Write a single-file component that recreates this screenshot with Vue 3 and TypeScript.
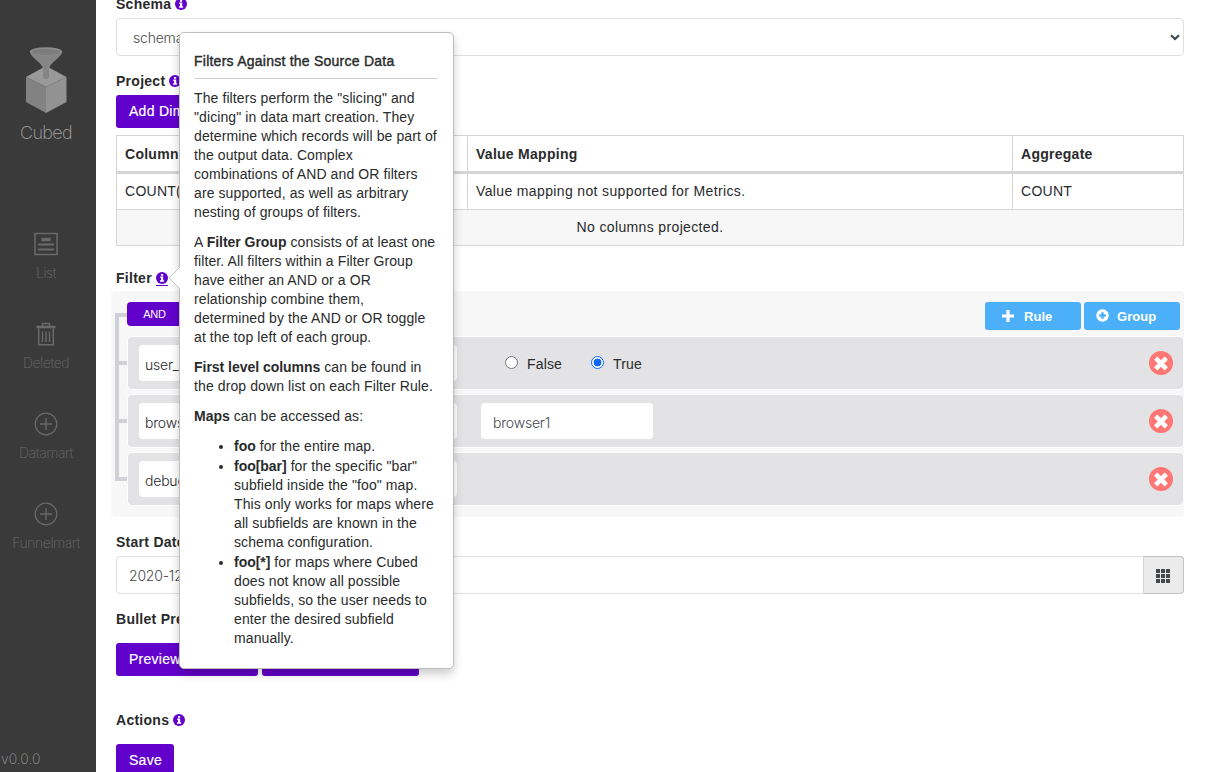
<script setup lang="ts">
interface NavItem { label: string; icon: 'list' | 'trash' | 'plus' }
interface Rule { column: string; kind: 'bool' | 'text' | 'none'; value: string }

const nav: NavItem[] = [
  { label: 'List', icon: 'list' },
  { label: 'Deleted', icon: 'trash' },
  { label: 'Datamart', icon: 'plus' },
  { label: 'Funnelmart', icon: 'plus' },
]
const rules: Rule[] = [
  { column: 'user_', kind: 'bool', value: 'True' },
  { column: 'brows', kind: 'text', value: 'browser1' },
  { column: 'debug', kind: 'none', value: '' },
]
const cells: number[] = [0, 1, 2, 3, 4, 5, 6, 7, 8]
</script>

<template>
  <div class="app">
    <aside class="side">
      <div class="brand">
        <svg width="46" height="70" viewBox="0 0 46 70">
          <path d="M3 31 23 20 43.500 31 23 41z" fill="#999" />
          <path d="M3 31 23 41V67L3 56z" fill="#828282" />
          <path d="M43.500 31 23 41V67L43.500 56z" fill="#929292" />
          <path d="M7 6C8 12 19 16 20 23V32Q23 34 26 32V23C27 16 38 12 39 6z" fill="#858585" />
          <ellipse cx="23" cy="5.500" rx="16.200" ry="4.300" fill="#8c8c8c" />
          <ellipse cx="23" cy="5.900" rx="14" ry="3" fill="#7c7c7c" />
        </svg>
        <span>Cubed</span>
      </div>
      <nav>
        <div v-for="n in nav" :key="n.label" class="nav-item">
          <svg v-if="n.icon === 'list'" width="24" height="24" viewBox="0 0 24 24" fill="none" stroke="#6a6a6a">
            <rect x="1" y="1.500" width="22" height="21" stroke-width="1.500" />
            <path d="M7.500 7.500h9" stroke-width="3.500" /><path d="M4 12.500h16M4 17.500h16" stroke-width="2" />
          </svg>
          <svg v-else-if="n.icon === 'trash'" width="24" height="24" viewBox="0 0 24 24" fill="none" stroke="#6a6a6a">
            <path d="M8.500 4V1.500h7V4" stroke-width="1.500" /><path d="M2.500 5h19" stroke-width="2.600" />
            <path d="M4.700 6.500v16.200h14.600V6.500" stroke-width="1.500" /><path d="M8.500 9.500v10.500M12 9.500v10.500M15.500 9.500v10.500" stroke-width="1.400" />
          </svg>
          <svg v-else width="24" height="24" viewBox="0 0 24 24" fill="none" stroke="#6a6a6a" stroke-width="1.300">
            <circle cx="12" cy="12" r="10.800" /><path d="M12 6v12M6 12h12" />
          </svg>
          <span>{{ n.label }}</span>
        </div>
      </nav>
      <span class="version">v0.0.0</span>
    </aside>

    <main class="main">
      <div class="label first">Schema
        <svg class="info" viewBox="0 0 12 12"><circle cx="6" cy="6" r="6" /><path d="M5 2h2.200v1.700H5zM4.200 4.600h3v3.700h.9v1.400H4V8.300h1V6h-.8z" fill="#fff" /></svg>
      </div>
      <div class="field select"><span>schema1</span>
        <svg width="10" height="7" viewBox="0 0 10 7"><path d="M1 1.200 5 5l4-3.800" fill="none" stroke="#3c434b" stroke-width="2" /></svg>
      </div>
      <div class="label project">Project
        <svg class="info" viewBox="0 0 12 12"><circle cx="6" cy="6" r="6" /><path d="M5 2h2.200v1.700H5zM4.200 4.600h3v3.700h.9v1.400H4V8.300h1V6h-.8z" fill="#fff" /></svg>
      </div>
      <button class="btn add">Add Dimension</button>
      <div class="table">
        <div class="row head"><span>Column</span><span>Value Mapping</span><span>Aggregate</span></div>
        <div class="row"><span>COUNT(*)</span><span class="wide">Value mapping not supported for Metrics.</span><span>COUNT</span></div>
        <div class="empty">No columns projected.</div>
      </div>
      <div class="label filter-label">Filter
        <span class="linked"><svg class="info" viewBox="0 0 12 12"><circle cx="6" cy="6" r="6" /><path d="M5 2h2.200v1.700H5zM4.200 4.600h3v3.700h.9v1.400H4V8.300h1V6h-.8z" fill="#fff" /></svg></span>
      </div>
      <section class="group">
        <div class="group-head">
          <button class="and">AND</button>
          <div class="group-actions">
            <button class="blue rule-btn"><svg width="12" height="12" viewBox="0 0 12 12"><path d="M6 0v12M0 6h12" stroke="#fff" stroke-width="3.200" /></svg>Rule</button>
            <button class="blue group-btn"><svg width="13" height="13" viewBox="0 0 13 13"><circle cx="6.500" cy="6.500" r="6.200" fill="#fff" /><path d="M6.500 3.200v6.600M3.200 6.500h6.600" stroke="#4bb0f9" stroke-width="2.400" /></svg>Group</button>
          </div>
        </div>
        <div v-for="r in rules" :key="r.column" class="rule">
          <div class="rule-col">{{ r.column }}</div>
          <div class="rule-op"></div>
          <div v-if="r.kind === 'bool'" class="radios">
            <i class="radio"></i><span class="false">False</span>
            <i class="radio on"></i><span>True</span>
          </div>
          <div v-else-if="r.kind === 'text'" class="rule-val">{{ r.value }}</div>
          <svg class="remove" width="24" height="24" viewBox="0 0 24 24"><circle cx="12" cy="12" r="12" fill="#ff7775" /><path d="M6.700 7.200 17.300 17.800M17.300 7.200 6.700 17.800" stroke="#fff" stroke-width="4.600" /></svg>
        </div>
      </section>
      <div class="label date-label">Start Date</div>
      <div class="field date"><span>2020-12-01</span>
        <div class="cal"><div class="dots"><i v-for="c in cells" :key="c"></i></div></div>
      </div>
      <div class="label bullet-label">Bullet Preview</div>
      <div class="buttons"><button class="btn prev">Preview Query</button><button class="btn prev2"></button></div>
      <div class="label actions-label">Actions
        <svg class="info" viewBox="0 0 12 12"><circle cx="6" cy="6" r="6" /><path d="M5 2h2.200v1.700H5zM4.200 4.600h3v3.700h.9v1.400H4V8.300h1V6h-.8z" fill="#fff" /></svg>
      </div>
      <button class="btn save">Save</button>
    </main>

    <div class="pop">
      <svg class="tip" width="12" height="24" viewBox="0 0 12 24"><path d="M12 1 1 12l11 11" fill="#fff" stroke="#c4c4c4" /></svg>
      <h4>Filters Against the Source Data</h4>
      <p>The filters perform the "slicing" and<br>"dicing" in data mart creation. They<br>determine which records will be part of<br>the output data. Complex<br>combinations of AND and OR filters<br>are supported, as well as arbitrary<br>nesting of groups of filters.</p>
      <p>A <b>Filter Group</b> consists of at least one<br>filter. All filters within a Filter Group<br>have either an AND or a OR<br>relationship combine them,<br>determined by the AND or OR toggle<br>at the top left of each group.</p>
      <p><b>First level columns</b> can be found in<br>the drop down list on each Filter Rule.</p>
      <p><b>Maps</b> can be accessed as:</p>
      <ul>
        <li><b>foo</b> for the entire map.</li>
        <li><b>foo[bar]</b> for the specific "bar"<br>subfield inside the "foo" map.<br>This only works for maps where<br>all subfields are known in the<br>schema configuration.</li>
        <li><b>foo[*]</b> for maps where Cubed<br>does not know all possible<br>subfields, so the user needs to<br>enter the desired subfield<br>manually.</li>
      </ul>
    </div>
  </div>
</template>

<style>
body { background: #fff; overflow: hidden; }
</style>
<style scoped>
*, *::before { box-sizing: border-box; }
.app { position: relative; display: flex; width: 1209px; height: 772px; overflow: hidden; font: 14px/20px "Liberation Sans", Arial, sans-serif; letter-spacing: 0.27px; color: #292b2c; }
button { font: inherit; letter-spacing: inherit; border: 0; padding: 0; margin: 0; }
.side { width: 96px; height: 772px; background: #3a3a3a; color: #6a6a6a; display: flex; flex-direction: column; font-family: Inter, sans-serif; font-weight: 200; letter-spacing: -0.45px; }
.brand { height: 232px; padding-top: 46px; padding-right: 4px; display: flex; flex-direction: column; align-items: center; color: #a6a6a6; }
.brand span { font-size: 18px; line-height: 24px; margin-top: 5px; letter-spacing: -0.7px; }
.nav-item { height: 90px; padding-right: 4px; display: flex; flex-direction: column; align-items: center; }
.nav-item span { margin-top: 7px; font-size: 14px; }
.version { margin-top: auto; height: 23px; color: #999; letter-spacing: 0; padding-left: 1px; }
.main { width: 1113px; padding: 0 25px 0 20px; display: flex; flex-direction: column; align-items: stretch; }
.label { height: 20px; font-weight: 700; display: flex; align-items: center; gap: 4px; flex: none; }
.first { margin-top: -6px; }
.info { width: 12px; height: 12px; fill: #6200cc; display: block; }
.field { height: 38px; flex: none; border: 1px solid #dfdfdf; border-radius: 4px; display: flex; align-items: center; justify-content: space-between; font-family: Inter, sans-serif; font-weight: 300; letter-spacing: -0.2px; color: #464a4c; }
.field > span { padding-top: 2px; }
.select { margin-top: 4px; padding: 0 3px 0 16px; }
.project { margin-top: 15px; }
.btn { height: 33px; background: #6200cc; color: #fff; border-radius: 3px; text-align: left; padding: 0 0 2px 13px; flex: none; -webkit-text-stroke: 0.2px #fff; white-space: nowrap; }
.add { margin-top: 4px; width: 130px; }
.table { margin-top: 7px; border: 1px solid #d5d5d5; height: 111px; flex: none; display: flex; flex-direction: column; }
.row { display: grid; grid-template-columns: 350px 545px 1fr; height: 36px; border-bottom: 1px solid #d5d5d5; line-height: 35px; }
.row span { padding-left: 8px; }
.row span + span { border-left: 1px solid #d5d5d5; }
.row .wide { letter-spacing: 0.36px; }
.head { height: 38px; border-bottom-width: 3px; font-weight: 700; line-height: 36px; }
.empty { flex: 1; background: #f7f7f7; text-align: center; line-height: 34px; letter-spacing: 0.36px; }
.filter-label { margin-top: 22px; }
.linked { height: 16px; padding-top: 2px; border-bottom: 1px solid #6200cc; }
.group { margin: 3px 0 0 -5px; width: 1073px; height: 226px; flex: none; background: #f7f7f7; border-radius: 5px; padding: 11px 0 0 16px; }
.group-head { position: relative; height: 34px; display: flex; justify-content: space-between; padding-right: 4px; }
.group-head::before { content: ""; position: absolute; left: -12px; top: 11px; width: 12px; height: 168px; border: solid #d0d1d6; border-width: 4px 0 0 4px; }
.and { width: 60px; height: 24px; background: #6200cc; color: #fff; border-radius: 4px; font-size: 11px; letter-spacing: -0.2px; padding-right: 5px; }
.group-actions { display: flex; gap: 3px; }
.blue { width: 96px; height: 28px; border-radius: 3px; background: #4bb0f9; color: #fff; font-weight: 700; font-size: 13px; letter-spacing: 0.05px; padding-top: 1px; display: flex; align-items: center; }
.blue svg { margin-top: -2px; }
.rule-btn { padding-left: 17px; gap: 10px; }
.group-btn { padding-left: 12px; gap: 8px; }
.rule { position: relative; height: 54px; margin-bottom: 4px; border: 1px solid #fff; border-radius: 5px; background: #e3e3e5; display: flex; align-items: center; padding-left: 11px; }
.rule::before { content: ""; position: absolute; left: -9px; top: 24px; width: 8px; height: 4px; background: #d0d1d6; }
.rule-col, .rule-val { height: 36px; line-height: 39px; background: #fff; border-radius: 4px; font-family: Inter, sans-serif; font-weight: 300; letter-spacing: -0.2px; color: #292b2c; }
.rule-col { width: 120px; padding-left: 6px; }
.rule-op { width: 190px; height: 36px; margin-left: 8px; border-radius: 4px; background: #fff; }
.rule-val { width: 172px; margin-left: 24px; padding-left: 12px; color: #464a4c; }
.radios { display: flex; align-items: center; margin-left: 48px; letter-spacing: 0.15px; }
.radios span { padding-top: 2px; }
.radio { width: 13px; height: 13px; border: 1px solid #767676; border-radius: 50%; background: #fff; margin: 0 9px 2px 0; }
.on { border-color: #0d68ff; background: radial-gradient(circle, #0d68ff 3.600px, #fff 4.200px); }
.false { margin-right: 29px; }
.remove { margin-left: auto; margin-right: 10px; }
.date-label { margin-top: 15px; }
.date { margin-top: 4px; padding-left: 12px; }
.cal { width: 41px; height: 38px; margin: -1px; border: 1px solid #c2c2c2; border-left-color: #d5d5d5; background: #ebebeb; border-radius: 0 4px 4px 0; display: flex; align-items: center; justify-content: center; padding: 1px 2px 0 0; }
.dots { display: grid; grid-template-columns: repeat(3, 4px); gap: 1px; }
.dots i { height: 4px; background: #45484a; }
.bullet-label { margin-top: 15px; }
.buttons { margin-top: 14px; display: flex; gap: 4px; }
.prev { width: 142px; } .prev2 { width: 157px; }
.actions-label { margin-top: 34px; }
.save { margin-top: 14px; width: 58px; }
.pop { position: absolute; left: 179px; top: 32px; width: 275px; height: 637px; background: #fff; border: 1px solid #bdbdbd; border-radius: 5px; box-shadow: 0 5px 10px rgba(0, 0, 0, 0.2); padding: 19px 15px 0 14px; line-height: 19px; white-space: nowrap; letter-spacing: 0.1px; }
.pop b { letter-spacing: -0.03px; }
.tip { position: absolute; left: -12px; top: 233px; }
h4 { margin: 0 0 10px; padding-bottom: 7px; border-bottom: 1px solid #d0d0d0; font: 400 14px/19px "Liberation Sans", Arial, sans-serif; letter-spacing: 0.24px; -webkit-text-stroke: 0.4px #292b2c; }
p { margin: 0 0 11px; }
ul { margin: 0; padding-left: 40px; }
li { margin-bottom: 1px; }
</style>
